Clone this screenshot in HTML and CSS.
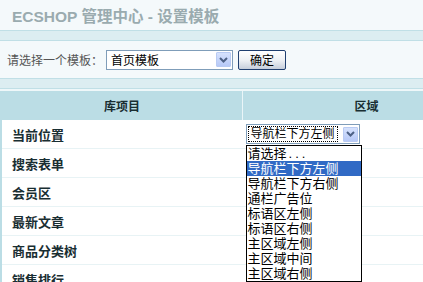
FILE: index.html
```html
<!DOCTYPE html>
<html lang="zh-CN">
<head>
    <meta charset="UTF-8">
    <title>ECSHOP 管理中心 - 设置模板</title>
    <link rel="stylesheet" href="styles.css">
</head>
<body>

    <!-- Page title -->
    <div class="page-head">
        <h1>ECSHOP 管理中心 - 设置模板</h1>
    </div>
    <div class="band"></div>

    <!-- Template chooser -->
    <div class="form-row">
        <span class="label">请选择一个模板：</span>
        <div class="select select-template">
            <span class="select-text">首页模板</span>
            <span class="select-arrow">
                <svg width="9" height="6" viewBox="0 0 9 6"><path d="M1 1 L4.5 4.5 L8 1" fill="none" stroke="#4d6185" stroke-width="2"/></svg>
            </span>
        </div>
        <button class="btn">确定</button>
    </div>
    <div class="band"></div>

    <!-- Library items -->
    <table class="list">
        <tr>
            <th class="col-item">库项目</th>
            <th class="col-region">区域</th>
        </tr>
        <tr>
            <td class="item">当前位置</td>
            <td>
                <div class="select-wrap">
                    <div class="select select-region">
                        <span class="select-text focused">导航栏下方左侧</span>
                        <span class="select-arrow">
                            <svg width="9" height="6" viewBox="0 0 9 6"><path d="M1 1 L4.5 4.5 L8 1" fill="none" stroke="#4d6185" stroke-width="2"/></svg>
                        </span>
                    </div>
                    <ul class="dropdown">
                        <li>请选择<span class="dots">...</span></li>
                        <li class="selected">导航栏下方左侧</li>
                        <li>导航栏下方右侧</li>
                        <li>通栏广告位</li>
                        <li>标语区左侧</li>
                        <li>标语区右侧</li>
                        <li>主区域左侧</li>
                        <li>主区域中间</li>
                        <li>主区域右侧</li>
                    </ul>
                </div>
            </td>
        </tr>
        <tr><td class="item">搜索表单</td><td></td></tr>
        <tr><td class="item">会员区</td><td></td></tr>
        <tr><td class="item">最新文章</td><td></td></tr>
        <tr><td class="item">商品分类树</td><td></td></tr>
        <tr><td class="item">销售排行</td><td></td></tr>
    </table>

</body>
</html>
```

FILE: styles.css
```css
html, body {
    overflow: hidden;
}
body {
    margin: 0;
    width: 490px;
    font-family: "Liberation Sans", "Noto Sans CJK SC", sans-serif;
    font-size: 12px;
    color: #192e32;
    background: #f4f9fb;
}
.page-head {
    height: 30px;
    display: flex;
    align-items: center;
    padding-left: 12px;
    background: #f4f9fb;
}
.page-head h1 {
    margin: 0;
    font-size: 15.5px;
    font-weight: bold;
    color: #9aabaf;
}
.band {
    height: 9px;
    background: #dcedf1;
    border-top: 1px solid #c0dfe6;
    border-bottom: 1px solid #c0dfe6;
}
.form-row {
    height: 37px;
    display: flex;
    align-items: center;
    padding-left: 7px;
    background: #f4f9fb;
}
.label {
    color: #555;
    margin-right: 3px;
}
.select {
    display: flex;
    align-items: center;
    justify-content: space-between;
    box-sizing: border-box;
    background: #fff;
    border: 1px solid #7f9db9;
    color: #000;
    white-space: nowrap;
}
.select-template {
    width: 127px;
    height: 20px;
    padding: 0 1px 0 4px;
}
.select-arrow {
    flex-shrink: 0;
    width: 15px;
    height: 15px;
    box-sizing: border-box;
    display: flex;
    align-items: center;
    justify-content: center;
    background: linear-gradient(#d6e2fd, #b7c9f7);
    border: 1px solid #b9cbf3;
    border-radius: 1px;
}
.btn {
    margin-left: 5px;
    width: 48px;
    height: 20px;
    padding: 0;
    font-family: "Noto Sans CJK SC", sans-serif;
    font-size: 12px;
    color: #000;
    border: 1px solid #1f3f70;
    border-radius: 2px;
    background: linear-gradient(#ffffff, #eef1f5 50%, #c5cedb);
}
.list {
    border-collapse: collapse;
    width: 490px;
    border-top: 2px solid #eef7f9;
    border-left: 2px solid #bbdde5;
    background: #fff;
}
.list th {
    height: 29px;
    padding: 0;
    background: #bbdde5;
    font-weight: bold;
    text-align: center;
}
.col-item {
    width: 240px;
    border-right: 1px solid #eaf5f8;
}
.list td {
    height: 28px;
    padding: 0;
    border-bottom: 1px solid #e8f3f5;
    vertical-align: middle;
}
.item {
    padding-left: 10px !important;
    font-size: 13px;
    font-weight: bold;
}
.select-wrap {
    position: relative;
    margin-left: 3px;
    width: 114px;
    font-size: 13px;
}
.select-region {
    width: 114px;
    height: 20px;
    padding: 0 1px;
}
.focused {
    flex-shrink: 0;
    border: 1px dotted #000;
    padding: 0 2px;
    font-size: 12px;
    line-height: 14px;
}
.dropdown {
    position: absolute;
    top: 21px;
    left: 0;
    width: 116px;
    box-sizing: border-box;
    margin: 0;
    padding: 0;
    list-style: none;
    background: #fff;
    border: 1px solid #000;
    color: #000;
    z-index: 2;
}
.dropdown li {
    height: 15px;
    line-height: 15px;
    padding-left: 1px;
    white-space: nowrap;
}
.dropdown .dots {
    letter-spacing: 3px;
    margin-left: 2px;
}
.dropdown .selected {
    background: #316ac5;
    color: #fff;
}
```
